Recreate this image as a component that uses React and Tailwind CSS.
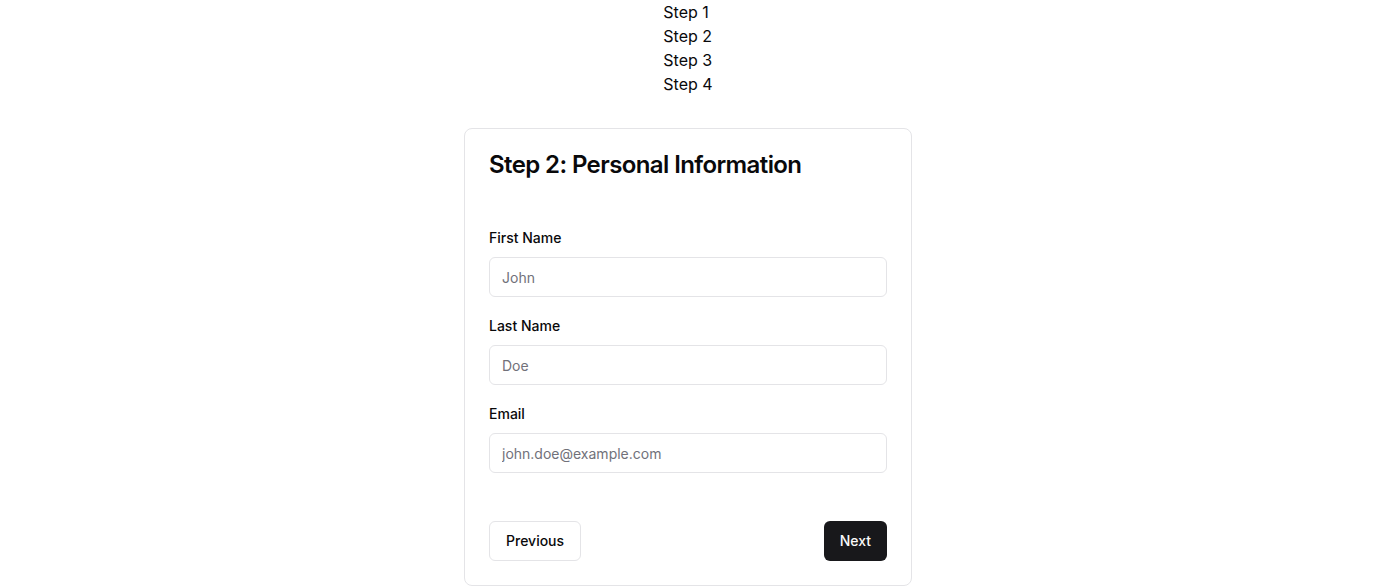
import React from "react";

function Field({ label, placeholder }) {
  return (
    <div>
      <div className="leading-6">
        <label className="text-sm font-medium leading-none">{label}</label>
      </div>
      <input
        placeholder={placeholder}
        className="mt-2 flex h-10 w-full rounded-md border border-[#e4e4e7] bg-white px-3 py-2 text-sm placeholder:text-[#71717a] outline-none"
      />
    </div>
  );
}

export default function App() {
  return (
    <div className="min-h-screen bg-white text-[#09090b]" style={{ fontFamily: "Inter, 'Noto Sans', sans-serif" }}>
      <div className="flex flex-col items-center">
        <div className="flex flex-col items-start text-base leading-6">
          <div>Step 1</div>
          <div>Step 2</div>
          <div>Step 3</div>
          <div>Step 4</div>
        </div>
        <div className="mt-8 w-[448px] rounded-lg border border-[#e4e4e7] bg-white">
          <div className="flex flex-col p-6">
            <h3 className="text-2xl font-semibold leading-none tracking-tight">Step 2: Personal Information</h3>
          </div>
          <div className="flex flex-col gap-4 p-6">
            <Field label="First Name" placeholder="John" />
            <Field label="Last Name" placeholder="Doe" />
            <Field label="Email" placeholder="john.doe@example.com" />
          </div>
          <div className="flex items-center justify-between p-6">
            <button className="inline-flex h-10 items-center justify-center rounded-md border border-[#e4e4e7] bg-white px-4 py-2 text-sm font-medium">
              Previous
            </button>
            <button className="inline-flex h-10 items-center justify-center rounded-md bg-[#18181b] px-4 py-2 text-sm font-medium text-[#fafafa]">
              Next
            </button>
          </div>
        </div>
      </div>
    </div>
  );
}
